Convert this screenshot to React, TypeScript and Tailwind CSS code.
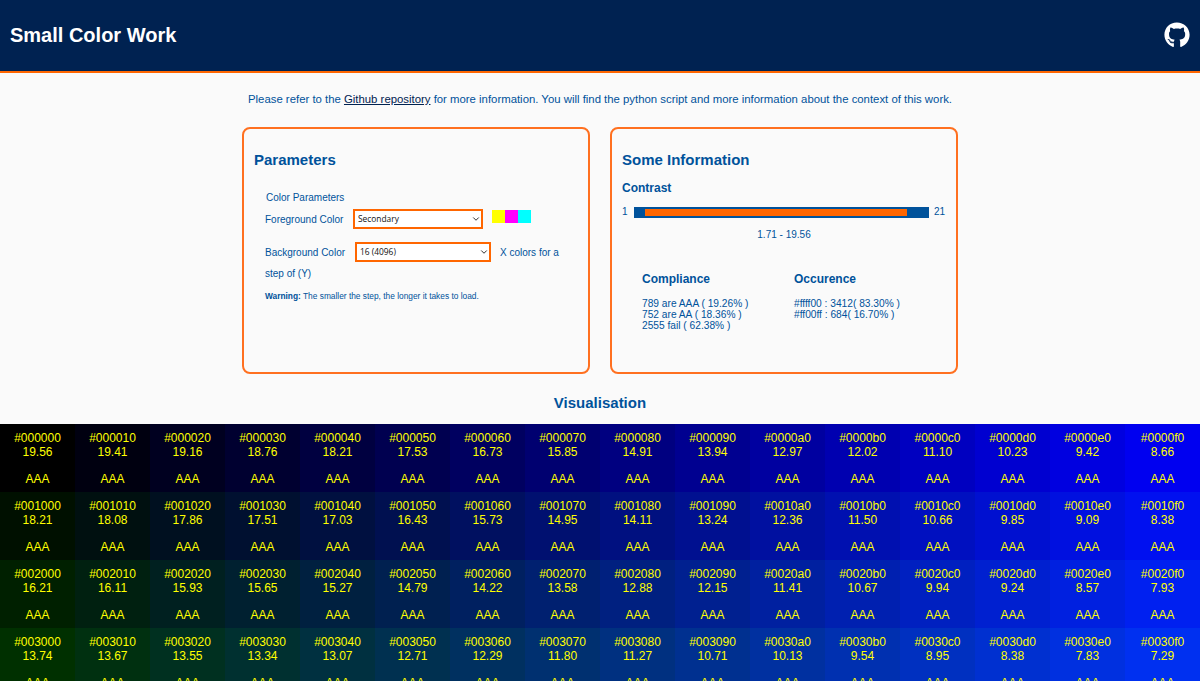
import { FaGithub } from "react-icons/fa";
import { ChevronDown } from "lucide-react";

const FONT = "font-['Liberation_Sans',Arial,sans-serif]";

const BLUES = ["00", "10", "20", "30", "40", "50", "60", "70", "80", "90", "a0", "b0", "c0", "d0", "e0", "f0"];

const RATIOS: { green: string; row: string[] }[] = [
  { green: "00", row: ["19.56", "19.41", "19.16", "18.76", "18.21", "17.53", "16.73", "15.85", "14.91", "13.94", "12.97", "12.02", "11.10", "10.23", "9.42", "8.66"] },
  { green: "10", row: ["18.21", "18.08", "17.86", "17.51", "17.03", "16.43", "15.73", "14.95", "14.11", "13.24", "12.36", "11.50", "10.66", "9.85", "9.09", "8.38"] },
  { green: "20", row: ["16.21", "16.11", "15.93", "15.65", "15.27", "14.79", "14.22", "13.58", "12.88", "12.15", "11.41", "10.67", "9.94", "9.24", "8.57", "7.93"] },
  { green: "30", row: ["13.74", "13.67", "13.55", "13.34", "13.07", "12.71", "12.29", "11.80", "11.27", "10.71", "10.13", "9.54", "8.95", "8.38", "7.83", "7.29"] },
];

function Swatches() {
  return (
    <div className="flex">
      <div className="h-[13px] w-[13px] bg-[#ffff00]" />
      <div className="h-[13px] w-[13px] bg-[#ff00ff]" />
      <div className="h-[13px] w-[13px] bg-[#00ffff]" />
    </div>
  );
}

function Select({ value, width }: { value: string; width: string }) {
  return (
    <div className={`relative h-[20px] ${width}`}>
      <select
        defaultValue={value}
        className="h-full w-full appearance-none border-2 border-[#ff6600] bg-white pt-[1px] pl-[3px] font-['Open_Sans',sans-serif] text-[8.4px] text-[#111111]"
      >
        <option value={value}>{value}</option>
      </select>
      <ChevronDown size={10} strokeWidth={2.25} className="pointer-events-none absolute top-[5px] right-[2px] text-[#222222]" />
    </div>
  );
}

function ParametersPanel() {
  return (
    <section className="h-[247px] w-[348px] rounded-lg border-2 border-[#ff7020] px-[10px] pt-[21px] text-[#00529b]">
      <h2 className="text-[15px] leading-[20px] font-bold">Parameters</h2>
      <div className="pl-[11px] text-[10px]">
        <p className="mt-[21px] ml-[1px] leading-[14px]">Color Parameters</p>
        <div className="mt-[4px] flex items-center">
          <label className="w-[88px] pt-[2px] leading-[14px]">Foreground Color</label>
          <Select value="Secondary" width="w-[130px]" />
          <div className="mb-[5px] ml-[9px]">
            <Swatches />
          </div>
        </div>
        <div className="mt-[13px] flex items-center">
          <label className="w-[90px] pt-[2px] leading-[14px]">Background Color</label>
          <Select value="16 (4096)" width="w-[136px]" />
          <span className="ml-[9px] pt-[2px] leading-[14px]">X colors for a</span>
        </div>
        <p className="mt-[5px] leading-[14px]">step of (Y)</p>
        <p className="mt-[9px] text-[8.35px] leading-[12px]">
          <b>Warning:</b> The smaller the step, the longer it takes to load.
        </p>
      </div>
    </section>
  );
}

function InfoPanel() {
  return (
    <section className="h-[247px] w-[348px] rounded-lg border-2 border-[#ff7020] px-[10px] pt-[21px] text-[#00529b]">
      <h2 className="text-[15px] leading-[20px] font-bold">Some Information</h2>
      <h3 className="mt-[10px] text-[12px] leading-[16px] font-bold">Contrast</h3>
      <div className="mt-[10px] flex items-center text-[10px] leading-[12px]">
        <span className="w-[12px]">1</span>
        <div className="h-[11px] w-[295px] bg-[#00529b] py-[2px] pl-[11px]">
          <div className="h-[7px] w-[262px] bg-[#ff6600]" />
        </div>
        <span className="ml-[5px]">21</span>
      </div>
      <p className="mt-[10px] text-center text-[10px] leading-[14px]">1.71 - 19.56</p>
      <div className="mt-[29px] flex pl-[20px]">
        <div className="w-[152px]">
          <h3 className="text-[12px] leading-[16px] font-bold">Compliance</h3>
          <p className="mt-[11px] text-[10.2px] leading-[11px]">
            789 are AAA ( 19.26% )
            <br />
            752 are AA ( 18.36% )
            <br />
            2555 fail ( 62.38% )
          </p>
        </div>
        <div>
          <h3 className="text-[12px] leading-[16px] font-bold">Occurence</h3>
          <p className="mt-[11px] text-[10.2px] leading-[11px]">
            #ffff00 : 3412( 83.30% )
            <br />
            #ff00ff : 684( 16.70% )
          </p>
        </div>
      </div>
    </section>
  );
}

function ColorGrid() {
  return (
    <div className="grid grid-cols-16">
      {RATIOS.flatMap(({ green, row }) =>
        row.map((ratio, i) => {
          const hex = `#00${green}${BLUES[i]}`;
          return (
            <div
              key={hex}
              style={{ backgroundColor: hex }}
              className="h-[68px] pt-[7px] text-center text-[12px] leading-[14px] text-[#ffff00]"
            >
              <div>{hex}</div>
              <div>{ratio}</div>
              <div className="mt-[13px]">AAA</div>
            </div>
          );
        })
      )}
    </div>
  );
}

export default function App() {
  return (
    <div className={`${FONT} h-screen overflow-hidden bg-[#fafafa]`}>
      <header className="flex h-[73px] items-center justify-between border-b-2 border-[#ff6600] bg-[#002251] px-[10px] pb-[2px] text-white">
        <h1 className="text-[20px] font-bold">Small Color Work</h1>
        <FaGithub size={26} />
      </header>
      <p className="mt-[18px] text-center text-[11.36px] leading-[16px] text-[#00529b]">
        Please refer to the{" "}
        <a href="#" className="text-[#002251] underline">
          Github repository
        </a>{" "}
        for more information. You will find the python script and more information about the context of this work.
      </p>
      <div className="mt-[20px] flex justify-center gap-5">
        <ParametersPanel />
        <InfoPanel />
      </div>
      <h2 className="mt-[19px] text-center text-[15px] leading-[20px] font-bold text-[#00529b]">Visualisation</h2>
      <div className="mt-[11px]">
        <ColorGrid />
      </div>
    </div>
  );
}
